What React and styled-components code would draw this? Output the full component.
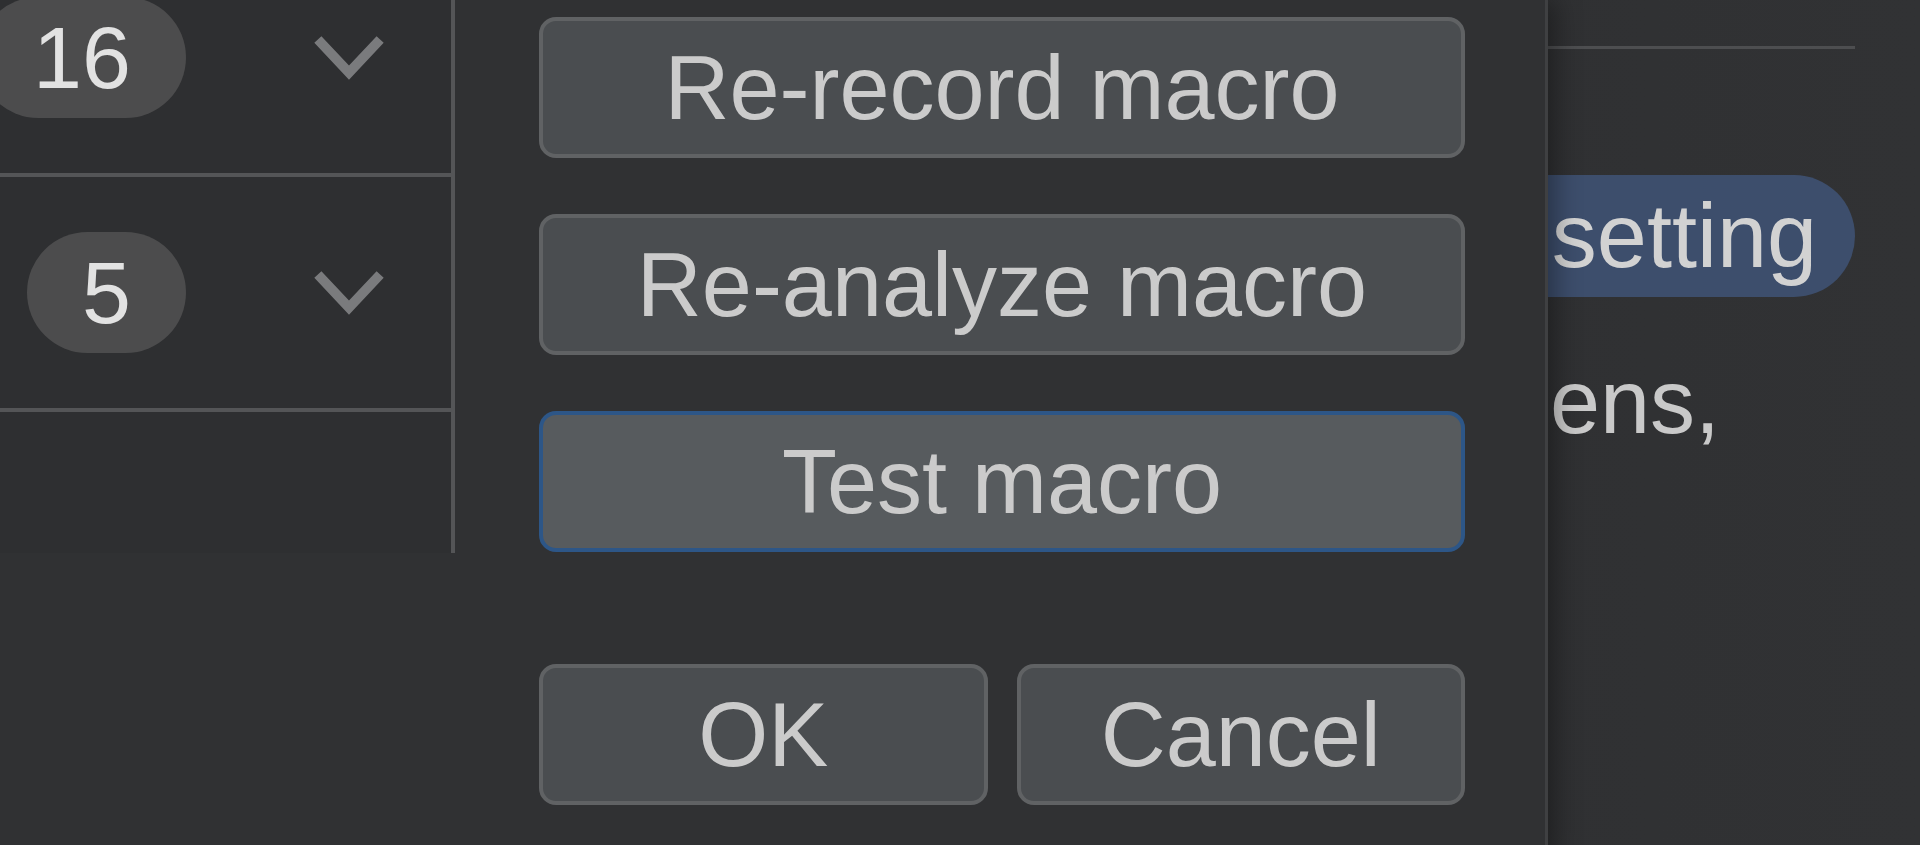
import React from "react";
import styled, { createGlobalStyle } from "styled-components";

const GlobalStyle = createGlobalStyle`
  html, body {
    margin: 0;
    padding: 0;
    background: #2c2d2f;
    overflow: hidden;
  }
  body {
    font-family: "Liberation Sans", Arial, Helvetica, sans-serif;
  }
`;

const Page = styled.div`
  display: flex;
  width: 1920px;
  height: 845px;
  overflow: hidden;
  background: linear-gradient(90deg, #28292b 0%, #2c2d2f 30%, #313234 100%);
`;

const Dialog = styled.div`
  flex: none;
  width: 1545px;
  height: 880px;
  display: flex;
  align-items: flex-start;
  background: #303133;
  border-right: 3px solid #3f4042;
  border-bottom-right-radius: 34px;
  box-shadow: 8px 0 26px rgba(0, 0, 0, 0.35);
  position: relative;
  z-index: 1;
`;

const Table = styled.div`
  flex: none;
  width: 451px;
  margin-top: -58px;
  display: flex;
  flex-direction: column;
  background: #2e2f31;
  border-right: 4px solid #545557;
`;

const Row = styled.div`
  display: grid;
  grid-template-columns: 186px 127px 72px;
  align-items: center;
  height: ${(p) => p.$h}px;
  border-bottom: ${(p) => (p.$last ? "none" : "4px solid #545557")};
`;

const BadgeCell = styled.div`
  display: flex;
  justify-content: flex-end;
`;

const Badge = styled.span`
  display: inline-flex;
  align-items: center;
  justify-content: center;
  height: 121px;
  padding: 0 55px;
  border-radius: 61px;
  background: #4c4c4d;
  color: #e2e2e2;
  font-size: 88px;
  line-height: 1;
  white-space: nowrap;
`;

const ChevronCell = styled.div`
  grid-column: 3;
  display: flex;
  justify-content: center;
`;

const Chevron = () => (
  <svg width="74" height="48" viewBox="0 0 74 48" aria-hidden="true">
    <polyline
      points="5,5 37,39 69,5"
      fill="none"
      stroke="#7a7b7d"
      strokeWidth="10"
      strokeLinejoin="miter"
    />
  </svg>
);

const Actions = styled.div`
  flex: none;
  width: 926px;
  margin-left: 84px;
  padding-top: 17px;
  display: flex;
  flex-direction: column;
  gap: 56px;
`;

const Button = styled.button`
  box-sizing: border-box;
  height: 141px;
  width: 100%;
  margin: 0;
  padding: 0;
  border-radius: 17px;
  border: 4px solid ${(p) => (p.$focused ? "#2d5687" : "#606264")};
  background: ${(p) => (p.$focused ? "#575b5e" : "#4a4d50")};
  color: #cbcbcb;
  font-family: "Liberation Sans", Arial, Helvetica, sans-serif;
  font-size: 90px;
  line-height: 1;
  display: flex;
  align-items: center;
  justify-content: center;
  white-space: nowrap;
`;

const Footer = styled.div`
  margin-top: 56px;
  display: grid;
  grid-template-columns: 1fr 1fr;
  gap: 29px;
`;

const Side = styled.div`
  flex: 1;
  min-width: 0;
  overflow: hidden;
  padding-right: 65px;
  display: flex;
  flex-direction: column;
`;

const Rule = styled.div`
  margin-top: 46px;
  height: 3px;
  background: #4d4e50;
`;

const Highlight = styled.div`
  margin-top: 126px;
  height: 122px;
  display: flex;
  align-items: center;
  justify-content: flex-end;
  padding-right: 38px;
  background: #3d4e6c;
  border-radius: 0 61px 61px 0;
  color: #d2d2d2;
  font-size: 90px;
  line-height: 1;
  white-space: nowrap;
`;

const BodyText = styled.div`
  margin-top: 60px;
  padding-left: 2px;
  color: #c9c9c9;
  font-size: 90px;
  line-height: 1;
  white-space: nowrap;
`;

const rows = [
  { h: 231, value: "16" },
  { h: 231, value: "5" },
  { h: 141, value: null, last: true },
];

export default function App() {
  return (
    <>
      <GlobalStyle />
      <Page>
        <Dialog>
          <Table>
            {rows.map((r, i) => (
              <Row key={i} $h={r.h} $last={r.last}>
                {r.value && (
                  <>
                    <BadgeCell>
                      <Badge>{r.value}</Badge>
                    </BadgeCell>
                    <ChevronCell>
                      <Chevron />
                    </ChevronCell>
                  </>
                )}
              </Row>
            ))}
          </Table>
          <Actions>
            <Button>Re-record macro</Button>
            <Button>Re-analyze macro</Button>
            <Button $focused>Test macro</Button>
            <Footer>
              <Button>OK</Button>
              <Button>Cancel</Button>
            </Footer>
          </Actions>
        </Dialog>
        <Side>
          <Rule />
          <Highlight>setting</Highlight>
          <BodyText>ens,</BodyText>
        </Side>
      </Page>
    </>
  );
}
